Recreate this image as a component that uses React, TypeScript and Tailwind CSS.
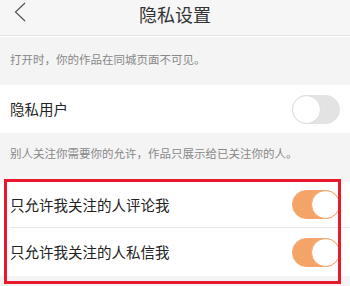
import { useState } from "react"

function Toggle({ on, onChange }: { on: boolean; onChange: () => void }) {
  return (
    <button
      onClick={onChange}
      className={`relative h-[29px] w-[48px] shrink-0 rounded-full border ${
        on ? "border-[#f4a466] bg-[#f4a466]" : "border-[#e3e3e3] bg-[#e3e3e3]"
      }`}
    >
      <span
        className={`absolute top-[-1px] h-[29px] w-[29px] rounded-full bg-white ${
          on ? "right-[-1px] border border-[#f4a466]" : "left-[-1px] border border-[#dcdcdc]"
        }`}
      />
    </button>
  )
}

export default function App() {
  const [privateUser, setPrivateUser] = useState(false)
  const [commentOnly, setCommentOnly] = useState(true)
  const [messageOnly, setMessageOnly] = useState(true)

  return (
    <main
      className="relative h-[286px] w-[350px] overflow-hidden bg-[#f4f4f4]"
      style={{ fontFamily: '"Noto Sans CJK SC", "Noto Sans", sans-serif' }}
    >
      {/* header */}
      <header className="relative flex h-[36px] items-start justify-center border-b border-[#e4e4e4] bg-[#f6f6f6]">
        <svg className="absolute left-[14px] top-[2px]" width="12" height="20" viewBox="0 0 12 20">
          <path d="M11 1 L1.5 10 L11 19" fill="none" stroke="#555" strokeWidth="1.2" />
        </svg>
        <h1 className="pt-[2px] text-[18px] leading-[24px] text-[#333]">隐私设置</h1>
      </header>
      <div className="h-px bg-white" />

      <p className="flex h-[48px] items-center px-[10px] pb-[2px] text-[11.5px] text-[#888]">
        打开时，你的作品在同城页面不可见。
      </p>

      <div className="flex h-[48px] items-center justify-between bg-white pl-[10px] pr-[10px]">
        <span className="text-[14.5px] text-[#222]">隐私用户</span>
        <Toggle on={privateUser} onChange={() => setPrivateUser(!privateUser)} />
      </div>

      <p className="h-[49px] px-[10px] pt-[12px] text-[11.5px] leading-[16px] text-[#888]">
        别人关注你需要你的允许，作品只展示给已关注你的人。
      </p>

      <div className="bg-white">
        <div className="flex h-[45px] items-center justify-between pl-[10px] pr-[10px]">
          <span className="text-[14.5px] text-[#222]">只允许我关注的人评论我</span>
          <Toggle on={commentOnly} onChange={() => setCommentOnly(!commentOnly)} />
        </div>
        <div className="ml-[10px] h-px bg-[#e8e8e8]" />
        <div className="flex h-[48px] items-center justify-between pl-[10px] pr-[10px]">
          <span className="text-[14.5px] text-[#222]">只允许我关注的人私信我</span>
          <Toggle on={messageOnly} onChange={() => setMessageOnly(!messageOnly)} />
        </div>
      </div>

      {/* annotation box */}
      <div className="pointer-events-none absolute left-[4px] top-[179px] h-[105px] w-[337px] border-[3px] border-[#e8192c]" />
    </main>
  )
}
